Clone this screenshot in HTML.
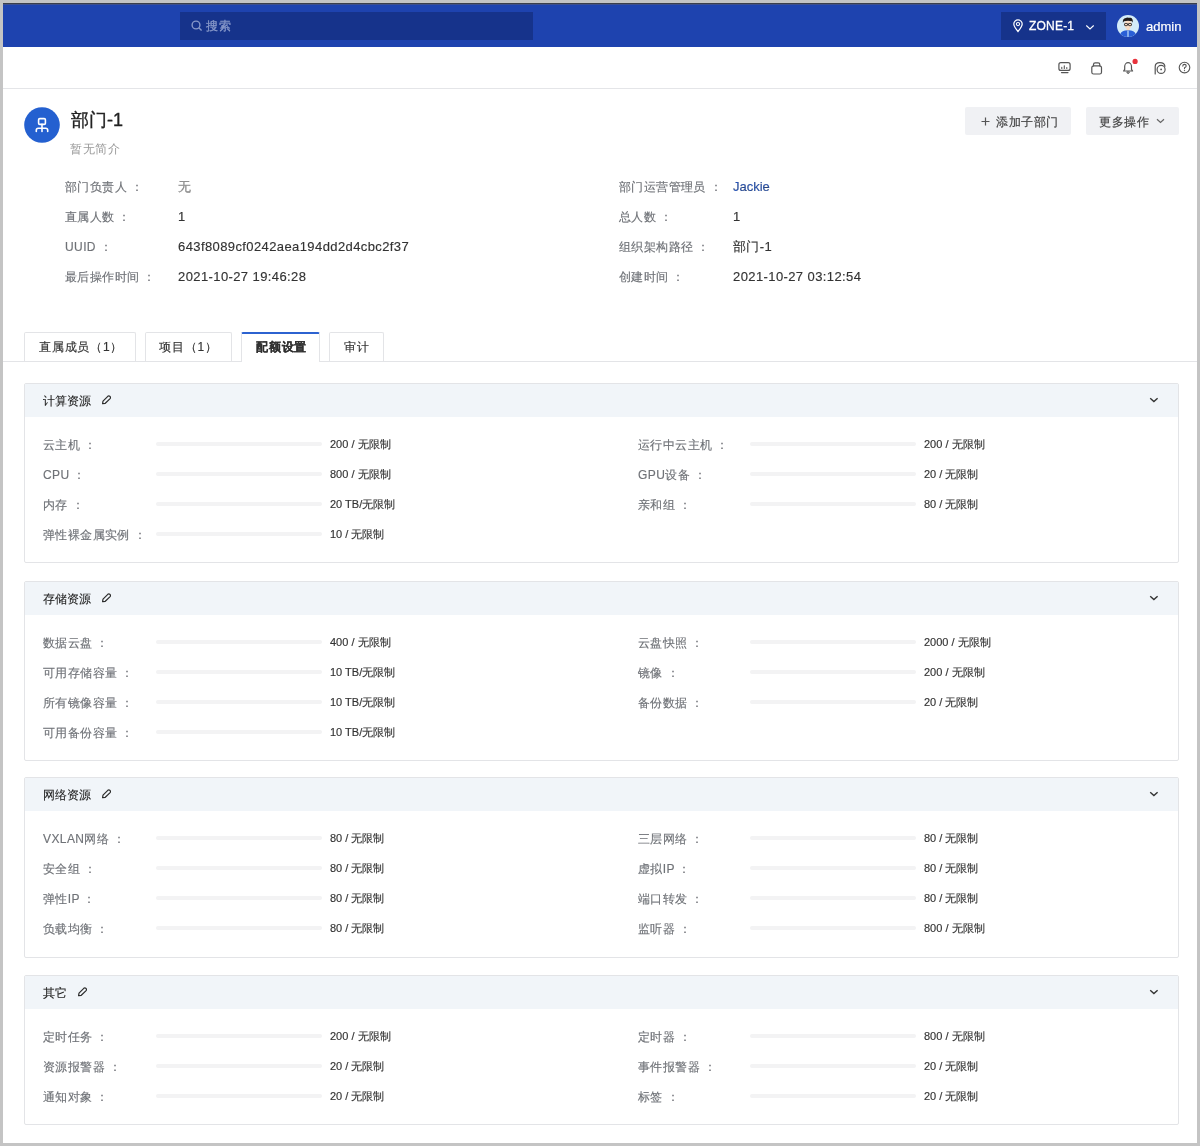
<!DOCTYPE html>
<html><head><meta charset="utf-8">
<style>
*{box-sizing:border-box;margin:0;padding:0}
html,body{width:1200px;height:1146px;overflow:hidden;background:#c4c4c4}
body{font-family:"Liberation Sans",sans-serif;position:relative;color:#333}
.abs{position:absolute}
#frame{position:absolute;left:3px;top:3px;width:1194px;height:1140px;background:#fff;overflow:hidden;will-change:transform}
#topline{position:absolute;left:0;top:0;width:1194px;height:1px;background:#3a3e4a}
#hdr{position:absolute;left:0;top:1px;width:1194px;height:43px;background:#1e43af}
#search{position:absolute;left:177px;top:8px;width:353px;height:28px;background:#16338b}
#search span{position:absolute;left:26px;top:7px;font-size:12px;color:#8798c9;line-height:14px;letter-spacing:0.5px;-webkit-text-stroke:0.3px #8798c9}
#zone{position:absolute;left:998px;top:8px;width:105px;height:28px;background:#16338b}
#zone .t{position:absolute;left:28px;top:7px;font-size:12px;color:#fff;line-height:14px;letter-spacing:0.2px;-webkit-text-stroke:0.3px #fff}
#admin{position:absolute;left:1143px;top:15px;font-size:13px;color:#fff;line-height:16px;-webkit-text-stroke:0.2px #fff}
#tb{position:absolute;left:0;top:44px;width:1194px;height:42px;background:#fff;border-bottom:1px solid #e4e5e8}
.t12{font-size:12px;line-height:14px;position:absolute;white-space:nowrap}
.t13{font-size:13px;line-height:15px;position:absolute;white-space:nowrap}
.lab{color:#6f7277;letter-spacing:0.4px;-webkit-text-stroke:0.15px #6f7277}
.val{color:#333;-webkit-text-stroke:0.15px #333}
.btn{position:absolute;top:104px;height:28px;background:#f0f1f4;border-radius:2px;font-size:12px;color:#444;line-height:14px;white-space:nowrap}
.tab{position:absolute;top:329px;height:29px;border:1px solid #e3e4e7;border-bottom:none;border-radius:2px 2px 0 0;background:#fff}
.tab.act{border-top:2px solid #2c62d0;height:30px;z-index:1}
.tabt{position:absolute;z-index:2;top:337px;font-size:12px;line-height:14px;color:#333;white-space:nowrap;letter-spacing:0.8px;-webkit-text-stroke:0.15px #333}
#tabline{position:absolute;left:0;top:358px;width:1194px;height:1px;background:#e3e4e7}
.card{position:absolute;left:21px;width:1155px;border:1px solid #e3e4e7;border-radius:2px;background:#fff}
.card .ch{position:absolute;left:0;top:0;width:1153px;height:33px;background:#f1f5f9}
.card .ct{position:absolute;left:18px;top:10px;font-size:12px;line-height:14px;color:#222;-webkit-text-stroke:0.1px #222}
.bar{position:absolute;height:4px;background:#f3f3f4;border-radius:2px;width:166px}
.v11{font-size:11px;line-height:13px;position:absolute;white-space:nowrap;color:#333;-webkit-text-stroke:0.15px #333}
</style></head><body>
<div id="frame">
<div id="topline"></div><div class="abs" style="left:0;top:1px;width:1194px;height:1px;background:#3e4f8c;z-index:2"></div>
<div id="hdr">
  <div id="search">
    <svg class="abs" style="left:11px;top:8px" width="12" height="12" viewBox="0 0 12 12"><circle cx="5" cy="5" r="3.9" fill="none" stroke="#8798c9" stroke-width="1.4"/><line x1="7.8" y1="7.8" x2="10.6" y2="10.6" stroke="#8798c9" stroke-width="1.4"/></svg>
    <span>搜索</span>
  </div>
  <div id="zone">
    <svg class="abs" style="left:11px;top:7px" width="12" height="14" viewBox="0 0 12 14"><path d="M6 12.5 C3.2 9.3 1.8 7.2 1.8 5.1 A4.2 4.2 0 0 1 10.2 5.1 C10.2 7.2 8.8 9.3 6 12.5Z" fill="none" stroke="#fff" stroke-width="1.2"/><circle cx="6" cy="5.1" r="1.6" fill="none" stroke="#fff" stroke-width="1.1"/></svg>
    <span class="t">ZONE-1</span>
    <svg class="abs" style="left:84px;top:12px" width="10" height="7" viewBox="0 0 10 7"><path d="M1.3 1.5 L5 5 L8.7 1.5" fill="none" stroke="#fff" stroke-width="1.1"/></svg>
  </div>
  <svg class="abs" style="left:1114px;top:11px" width="22" height="22" viewBox="0 0 22 22"><defs><clipPath id="av"><circle cx="11" cy="11" r="11"/></clipPath></defs><g clip-path="url(#av)"><rect width="22" height="22" fill="#d3ebf8"/><rect x="9.6" y="11.5" width="2.8" height="4.5" fill="#f7d9bf"/><path d="M2.5 22 Q3 16.6 8 15.6 L11 15.3 L14 15.6 Q19 16.6 19.5 22Z" fill="#2a5fd6"/><rect x="10.2" y="15.4" width="1.6" height="6.6" fill="#9cc0f0"/><ellipse cx="11" cy="9.6" rx="3.7" ry="4.6" fill="#f8dcc4"/><path d="M5.9 7.8 Q5.3 3.6 8.8 3 L10.4 2.5 Q12 3.1 13.6 2.7 Q16.3 3.5 15.8 7.8 L15 6.3 Q11 5.3 7 6.3Z" fill="#1f1a1a"/><g fill="none" stroke="#2b2b2b" stroke-width="0.9"><rect x="7.5" y="8.5" width="3" height="2.1" rx="0.6"/><rect x="11.5" y="8.5" width="3" height="2.1" rx="0.6"/><path d="M10.5 9.2 H11.5"/></g></g></svg>
  <span id="admin">admin</span>
</div>
<div id="tb">
<svg class="abs" style="left:1040px;top:0" width="154" height="42" viewBox="1040 0 154 42">
<g fill="none" stroke="#555" stroke-width="1.2" stroke-linecap="round" stroke-linejoin="round">
<rect x="1055.9" y="15.7" width="11.2" height="7.7" rx="2"/>
<path d="M1058.5 25.6 H1065"/>
<path d="M1058.8 21.5 V20.2 M1061.3 21.5 V18.8 M1063.8 21.5 V20.6" stroke-width="1.1"/>
<path d="M1088.8 20.6 Q1088.8 19.1 1090.5 18.8 H1096.8 Q1098.5 19.1 1098.5 20.6 V25.2 Q1098.5 27 1096.7 27 H1090.6 Q1088.8 27 1088.8 25.2Z"/>
<path d="M1090.5 18.8 V17.5 Q1090.5 15.8 1092.2 15.8 H1095.1 Q1096.8 15.8 1096.8 17.5 V18.8"/>
<path d="M1120.6 24 H1129.6 L1128.5 22.4 V19.6 A3.4 3.9 0 0 0 1121.7 19.6 V22.4Z"/>
<path d="M1123.9 25.3 A1.2 1.2 0 0 0 1126.3 25.3Z" stroke-width="1"/>
<path d="M1152.2 26.9 V19.6 Q1152.2 15.6 1156.8 15.6 Q1161.6 15.6 1161.9 19.4"/>
<circle cx="1158.1" cy="22.4" r="4"/>
<circle cx="1181.5" cy="20.6" r="5.3" stroke-width="1.1"/>
<path d="M1179.8 19.1 Q1179.8 17.4 1181.5 17.4 Q1183.2 17.4 1183.2 18.9 Q1183.2 20 1181.5 20.8 V21.8" stroke-width="1.1"/>
</g>
<circle cx="1158.1" cy="22.4" r="0.9" fill="#555"/>
<circle cx="1181.5" cy="23.6" r="0.7" fill="#555"/>
<circle cx="1132.1" cy="14.4" r="2.6" fill="#e8323c"/>
</svg>
</div>

<svg class="abs" style="left:21px;top:104px" width="36" height="36" viewBox="0 0 36 36"><circle cx="18" cy="18" r="17.8" fill="#2460d0"/>
<g fill="none" stroke="#fff" stroke-width="1.6" stroke-linecap="round" stroke-linejoin="round">
<rect x="14.6" y="11.6" width="6.8" height="5.8" rx="1.2"/>
<path d="M18 17.4 V24.5"/>
<path d="M12.3 24.5 V23.2 Q12.3 21.2 14.3 21.2 H21.7 Q23.7 21.2 23.7 23.2 V24.5"/>
</g></svg>
<div class="abs" style="left:68px;top:106px;font-size:18px;line-height:22px;color:#222;white-space:nowrap;-webkit-text-stroke:0.35px #222">部门-1</div>
<div class="abs" style="left:68px;top:139px;font-size:12px;line-height:14px;color:#999;white-space:nowrap;letter-spacing:0.5px;margin-left:-1px">暂无简介</div>
<div class="btn" style="left:962px;width:106px"><svg class="abs" style="left:16px;top:10px" width="9" height="9" viewBox="0 0 9 9"><path d="M4.5 0.5 V8.5 M0.5 4.5 H8.5" stroke="#555" stroke-width="1.2"/></svg><span class="abs" style="left:31px;top:8px;letter-spacing:0.6px;-webkit-text-stroke:0.2px #444">添加子部门</span></div>
<div class="btn" style="left:1083px;width:93px"><span class="abs" style="left:13px;top:8px;letter-spacing:0.5px;-webkit-text-stroke:0.2px #444">更多操作</span><svg class="abs" style="left:70px;top:11px" width="9" height="6" viewBox="0 0 9 6"><path d="M1 1.2 L4.5 4.5 L8 1.2" fill="none" stroke="#666" stroke-width="1.2"/></svg></div>
<div class="t12 lab" style="left:62px;top:177px">部门负责人 ：</div><div class="t13 val" style="left:175px;top:176px;color:#999">无</div><div class="t12 lab" style="left:62px;top:207px">直属人数 ：</div><div class="t13 val" style="left:175px;top:206px">1</div><div class="t12 lab" style="left:62px;top:237px">UUID ：</div><div class="t13 val" style="left:175px;top:236px;letter-spacing:0.4px">643f8089cf0242aea194dd2d4cbc2f37</div><div class="t12 lab" style="left:62px;top:267px">最后操作时间 ：</div><div class="t13 val" style="left:175px;top:266px;letter-spacing:0.4px">2021-10-27 19:46:28</div><div class="t12 lab" style="left:616px;top:177px">部门运营管理员 ：</div><div class="t13 val" style="left:730px;top:176px;color:#2454bb">Jackie</div><div class="t12 lab" style="left:616px;top:207px">总人数 ：</div><div class="t13 val" style="left:730px;top:206px">1</div><div class="t12 lab" style="left:616px;top:237px">组织架构路径 ：</div><div class="t13 val" style="left:730px;top:236px;letter-spacing:0.4px">部门-1</div><div class="t12 lab" style="left:616px;top:267px">创建时间 ：</div><div class="t13 val" style="left:730px;top:266px;letter-spacing:0.4px">2021-10-27 03:12:54</div><div id="tabline"></div><div class="tab" style="left:21px;width:112px"></div><div class="tabt" style="left:36px">直属成员（1）</div><div class="tab" style="left:142px;width:87px"></div><div class="tabt" style="left:156px">项目（1）</div><div class="tab act" style="left:238px;width:79px"></div><div class="tabt" style="left:253px;color:#222;font-weight:bold">配额设置</div><div class="tab" style="left:326px;width:55px"></div><div class="tabt" style="left:341px">审计</div><div class="card" style="top:380px;height:180px"><div class="ch"></div><div class="ct">计算资源</div><svg class="abs" style="left:76px;top:11px" width="10" height="10" viewBox="0 0 10 10"><path d="M1.6 8.6 L2 6.1 L6.8 1.3 Q7.8 0.4 8.8 1.3 L9.1 1.6 Q10 2.6 9.1 3.6 L4.3 8.3 Z" fill="none" stroke="#2a2a2a" stroke-width="1.2" stroke-linejoin="round"/></svg><svg class="abs" style="left:1124px;top:13px" width="11" height="7" viewBox="0 0 11 7"><path d="M1.2 1.3 L4.9 4.6 L8.6 1.3" fill="none" stroke="#333" stroke-width="1.4"/></svg><div class="t12 lab" style="left:18px;top:54px">云主机 ：</div><div class="bar" style="left:131px;top:58px"></div><div class="v11" style="left:305px;top:54px">200 / 无限制</div><div class="t12 lab" style="left:18px;top:84px">CPU ：</div><div class="bar" style="left:131px;top:88px"></div><div class="v11" style="left:305px;top:84px">800 / 无限制</div><div class="t12 lab" style="left:18px;top:114px">内存 ：</div><div class="bar" style="left:131px;top:118px"></div><div class="v11" style="left:305px;top:114px">20 TB/无限制</div><div class="t12 lab" style="left:18px;top:144px">弹性裸金属实例 ：</div><div class="bar" style="left:131px;top:148px"></div><div class="v11" style="left:305px;top:144px">10 / 无限制</div><div class="t12 lab" style="left:613px;top:54px">运行中云主机 ：</div><div class="bar" style="left:725px;top:58px"></div><div class="v11" style="left:899px;top:54px">200 / 无限制</div><div class="t12 lab" style="left:613px;top:84px">GPU设备 ：</div><div class="bar" style="left:725px;top:88px"></div><div class="v11" style="left:899px;top:84px">20 / 无限制</div><div class="t12 lab" style="left:613px;top:114px">亲和组 ：</div><div class="bar" style="left:725px;top:118px"></div><div class="v11" style="left:899px;top:114px">80 / 无限制</div></div><div class="card" style="top:578px;height:180px"><div class="ch"></div><div class="ct">存储资源</div><svg class="abs" style="left:76px;top:11px" width="10" height="10" viewBox="0 0 10 10"><path d="M1.6 8.6 L2 6.1 L6.8 1.3 Q7.8 0.4 8.8 1.3 L9.1 1.6 Q10 2.6 9.1 3.6 L4.3 8.3 Z" fill="none" stroke="#2a2a2a" stroke-width="1.2" stroke-linejoin="round"/></svg><svg class="abs" style="left:1124px;top:13px" width="11" height="7" viewBox="0 0 11 7"><path d="M1.2 1.3 L4.9 4.6 L8.6 1.3" fill="none" stroke="#333" stroke-width="1.4"/></svg><div class="t12 lab" style="left:18px;top:54px">数据云盘 ：</div><div class="bar" style="left:131px;top:58px"></div><div class="v11" style="left:305px;top:54px">400 / 无限制</div><div class="t12 lab" style="left:18px;top:84px">可用存储容量 ：</div><div class="bar" style="left:131px;top:88px"></div><div class="v11" style="left:305px;top:84px">10 TB/无限制</div><div class="t12 lab" style="left:18px;top:114px">所有镜像容量 ：</div><div class="bar" style="left:131px;top:118px"></div><div class="v11" style="left:305px;top:114px">10 TB/无限制</div><div class="t12 lab" style="left:18px;top:144px">可用备份容量 ：</div><div class="bar" style="left:131px;top:148px"></div><div class="v11" style="left:305px;top:144px">10 TB/无限制</div><div class="t12 lab" style="left:613px;top:54px">云盘快照 ：</div><div class="bar" style="left:725px;top:58px"></div><div class="v11" style="left:899px;top:54px">2000 / 无限制</div><div class="t12 lab" style="left:613px;top:84px">镜像 ：</div><div class="bar" style="left:725px;top:88px"></div><div class="v11" style="left:899px;top:84px">200 / 无限制</div><div class="t12 lab" style="left:613px;top:114px">备份数据 ：</div><div class="bar" style="left:725px;top:118px"></div><div class="v11" style="left:899px;top:114px">20 / 无限制</div></div><div class="card" style="top:774px;height:181px"><div class="ch"></div><div class="ct">网络资源</div><svg class="abs" style="left:76px;top:11px" width="10" height="10" viewBox="0 0 10 10"><path d="M1.6 8.6 L2 6.1 L6.8 1.3 Q7.8 0.4 8.8 1.3 L9.1 1.6 Q10 2.6 9.1 3.6 L4.3 8.3 Z" fill="none" stroke="#2a2a2a" stroke-width="1.2" stroke-linejoin="round"/></svg><svg class="abs" style="left:1124px;top:13px" width="11" height="7" viewBox="0 0 11 7"><path d="M1.2 1.3 L4.9 4.6 L8.6 1.3" fill="none" stroke="#333" stroke-width="1.4"/></svg><div class="t12 lab" style="left:18px;top:54px">VXLAN网络 ：</div><div class="bar" style="left:131px;top:58px"></div><div class="v11" style="left:305px;top:54px">80 / 无限制</div><div class="t12 lab" style="left:18px;top:84px">安全组 ：</div><div class="bar" style="left:131px;top:88px"></div><div class="v11" style="left:305px;top:84px">80 / 无限制</div><div class="t12 lab" style="left:18px;top:114px">弹性IP ：</div><div class="bar" style="left:131px;top:118px"></div><div class="v11" style="left:305px;top:114px">80 / 无限制</div><div class="t12 lab" style="left:18px;top:144px">负载均衡 ：</div><div class="bar" style="left:131px;top:148px"></div><div class="v11" style="left:305px;top:144px">80 / 无限制</div><div class="t12 lab" style="left:613px;top:54px">三层网络 ：</div><div class="bar" style="left:725px;top:58px"></div><div class="v11" style="left:899px;top:54px">80 / 无限制</div><div class="t12 lab" style="left:613px;top:84px">虚拟IP ：</div><div class="bar" style="left:725px;top:88px"></div><div class="v11" style="left:899px;top:84px">80 / 无限制</div><div class="t12 lab" style="left:613px;top:114px">端口转发 ：</div><div class="bar" style="left:725px;top:118px"></div><div class="v11" style="left:899px;top:114px">80 / 无限制</div><div class="t12 lab" style="left:613px;top:144px">监听器 ：</div><div class="bar" style="left:725px;top:148px"></div><div class="v11" style="left:899px;top:144px">800 / 无限制</div></div><div class="card" style="top:972px;height:150px"><div class="ch"></div><div class="ct">其它</div><svg class="abs" style="left:52px;top:11px" width="10" height="10" viewBox="0 0 10 10"><path d="M1.6 8.6 L2 6.1 L6.8 1.3 Q7.8 0.4 8.8 1.3 L9.1 1.6 Q10 2.6 9.1 3.6 L4.3 8.3 Z" fill="none" stroke="#2a2a2a" stroke-width="1.2" stroke-linejoin="round"/></svg><svg class="abs" style="left:1124px;top:13px" width="11" height="7" viewBox="0 0 11 7"><path d="M1.2 1.3 L4.9 4.6 L8.6 1.3" fill="none" stroke="#333" stroke-width="1.4"/></svg><div class="t12 lab" style="left:18px;top:54px">定时任务 ：</div><div class="bar" style="left:131px;top:58px"></div><div class="v11" style="left:305px;top:54px">200 / 无限制</div><div class="t12 lab" style="left:18px;top:84px">资源报警器 ：</div><div class="bar" style="left:131px;top:88px"></div><div class="v11" style="left:305px;top:84px">20 / 无限制</div><div class="t12 lab" style="left:18px;top:114px">通知对象 ：</div><div class="bar" style="left:131px;top:118px"></div><div class="v11" style="left:305px;top:114px">20 / 无限制</div><div class="t12 lab" style="left:613px;top:54px">定时器 ：</div><div class="bar" style="left:725px;top:58px"></div><div class="v11" style="left:899px;top:54px">800 / 无限制</div><div class="t12 lab" style="left:613px;top:84px">事件报警器 ：</div><div class="bar" style="left:725px;top:88px"></div><div class="v11" style="left:899px;top:84px">20 / 无限制</div><div class="t12 lab" style="left:613px;top:114px">标签 ：</div><div class="bar" style="left:725px;top:118px"></div><div class="v11" style="left:899px;top:114px">20 / 无限制</div></div>
</div></body></html>
